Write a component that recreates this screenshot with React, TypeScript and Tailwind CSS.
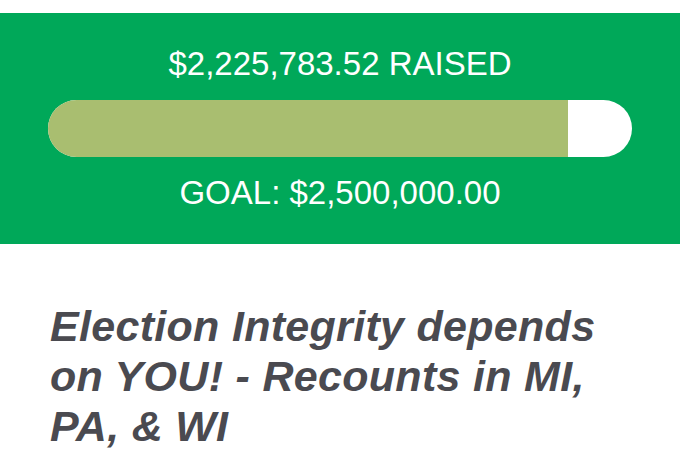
const raised = 2225783.52;
const goal = 2500000;

function money(n: number) {
  return "$" + n.toLocaleString("en-US", { minimumFractionDigits: 2, maximumFractionDigits: 2 });
}

export default function App() {
  const pct = (raised / goal) * 100;
  return (
    <div className="w-[680px] h-[470px] bg-white pt-[13px] overflow-hidden" style={{ fontFamily: '"Liberation Sans", Arial, sans-serif' }}>
      <div className="bg-[#00a859] h-[231px] flex flex-col items-center pt-[32px] px-[48px] text-white">
        <div className="text-[33px] leading-[38px]">{money(raised)} RAISED</div>
        <div className="w-full h-[57px] mt-[17px] rounded-full bg-white overflow-hidden flex">
          <div className="h-full bg-[#a9be70]" style={{ width: `${pct}%` }} />
        </div>
        <div className="text-[33px] leading-[38px] mt-[17px]">GOAL: {money(goal)}</div>
      </div>
      <h1 className="pl-[50px] pr-[50px] pt-[57px] text-[43px] leading-[50px] tracking-[0.3px] font-bold italic text-[#4a4a50]">
        Election Integrity depends on YOU! - Recounts in MI, PA, &amp; WI
      </h1>
    </div>
  );
}
